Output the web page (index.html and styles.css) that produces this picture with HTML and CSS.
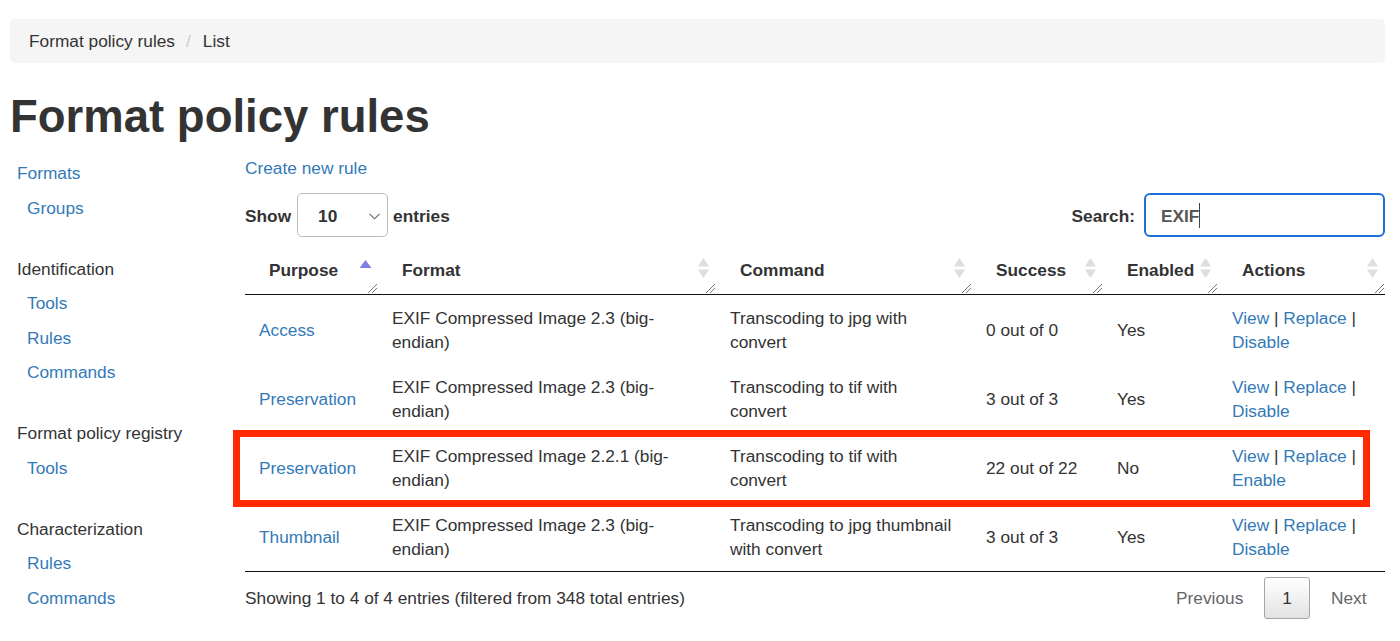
FILE: index.html
```html
<!DOCTYPE html>
<html lang="en">
<head>
<meta charset="utf-8">
<title>Format policy rules</title>
<link rel="stylesheet" href="styles.css">
</head>
<body>
<div class="page">
  <ol class="breadcrumb">
    <li>Format policy rules</li>
    <li class="sep">/</li>
    <li>List</li>
  </ol>
  <h1 class="title">Format policy rules</h1>
  <div class="layout">
    <nav class="sidebar">
      <ul class="nav-section">
        <li class="top"><a href="#">Formats</a></li>
        <li class="sub"><a href="#">Groups</a></li>
      </ul>
      <ul class="nav-section">
        <li class="top">Identification</li>
        <li class="sub"><a href="#">Tools</a></li>
        <li class="sub"><a href="#">Rules</a></li>
        <li class="sub"><a href="#">Commands</a></li>
      </ul>
      <ul class="nav-section">
        <li class="top">Format policy registry</li>
        <li class="sub"><a href="#">Tools</a></li>
      </ul>
      <ul class="nav-section">
        <li class="top">Characterization</li>
        <li class="sub"><a href="#">Rules</a></li>
        <li class="sub"><a href="#">Commands</a></li>
      </ul>
    </nav>
    <main class="main">
      <div class="create-line"><a href="#">Create new rule</a></div>
      <div class="controls">
        <div class="length">
          <span class="ctl-label">Show</span>
          <div class="select-box">
            <span>10</span>
            <svg class="chev" width="11" height="7" viewBox="0 0 11 7"><polyline points="0.5,0.8 5.5,5.8 10.5,0.8" fill="none" stroke="#666" stroke-width="1.1"/></svg>
          </div>
          <span class="ctl-label">entries</span>
        </div>
        <div class="search">
          <span class="ctl-label">Search:</span>
          <div class="search-input"><span>EXIF</span><span class="caret"></span></div>
        </div>
      </div>
      <div class="table-wrap">
        <table class="rules">
          <colgroup>
            <col class="c-purpose"><col class="c-format"><col class="c-command"><col class="c-success"><col class="c-enabled"><col class="c-actions">
          </colgroup>
          <thead>
            <tr>
              <th>Purpose
                <svg class="sort" width="13" height="20" viewBox="0 0 13 20"><polygon points="6.5,2 12.5,10 0.5,10" fill="#7f7fe3"/></svg>
                <svg class="grip" width="10" height="10" viewBox="0 0 10 10"><line x1="1" y1="10" x2="10" y2="1" stroke="#777" stroke-width="1"/><line x1="5" y1="10" x2="10" y2="5" stroke="#777" stroke-width="1"/></svg>
              </th>
              <th>Format
                <svg class="sort" width="13" height="20" viewBox="0 0 13 20"><polygon points="6.5,0 12,8.5 1,8.5" fill="#dedede"/><polygon points="1,11.5 12,11.5 6.5,20" fill="#dedede"/></svg>
                <svg class="grip" width="10" height="10" viewBox="0 0 10 10"><line x1="1" y1="10" x2="10" y2="1" stroke="#777" stroke-width="1"/><line x1="5" y1="10" x2="10" y2="5" stroke="#777" stroke-width="1"/></svg>
              </th>
              <th>Command
                <svg class="sort" width="13" height="20" viewBox="0 0 13 20"><polygon points="6.5,0 12,8.5 1,8.5" fill="#dedede"/><polygon points="1,11.5 12,11.5 6.5,20" fill="#dedede"/></svg>
                <svg class="grip" width="10" height="10" viewBox="0 0 10 10"><line x1="1" y1="10" x2="10" y2="1" stroke="#777" stroke-width="1"/><line x1="5" y1="10" x2="10" y2="5" stroke="#777" stroke-width="1"/></svg>
              </th>
              <th>Success
                <svg class="sort" width="13" height="20" viewBox="0 0 13 20"><polygon points="6.5,0 12,8.5 1,8.5" fill="#dedede"/><polygon points="1,11.5 12,11.5 6.5,20" fill="#dedede"/></svg>
                <svg class="grip" width="10" height="10" viewBox="0 0 10 10"><line x1="1" y1="10" x2="10" y2="1" stroke="#777" stroke-width="1"/><line x1="5" y1="10" x2="10" y2="5" stroke="#777" stroke-width="1"/></svg>
              </th>
              <th>Enabled
                <svg class="sort" width="13" height="20" viewBox="0 0 13 20"><polygon points="6.5,0 12,8.5 1,8.5" fill="#dedede"/><polygon points="1,11.5 12,11.5 6.5,20" fill="#dedede"/></svg>
                <svg class="grip" width="10" height="10" viewBox="0 0 10 10"><line x1="1" y1="10" x2="10" y2="1" stroke="#777" stroke-width="1"/><line x1="5" y1="10" x2="10" y2="5" stroke="#777" stroke-width="1"/></svg>
              </th>
              <th>Actions
                <svg class="sort" width="13" height="20" viewBox="0 0 13 20"><polygon points="6.5,0 12,8.5 1,8.5" fill="#dedede"/><polygon points="1,11.5 12,11.5 6.5,20" fill="#dedede"/></svg>
                <svg class="grip" width="10" height="10" viewBox="0 0 10 10"><line x1="1" y1="10" x2="10" y2="1" stroke="#777" stroke-width="1"/><line x1="5" y1="10" x2="10" y2="5" stroke="#777" stroke-width="1"/></svg>
              </th>
            </tr>
          </thead>
          <tbody>
            <tr>
              <td><a href="#">Access</a></td>
              <td>EXIF Compressed Image 2.3 (big-endian)</td>
              <td>Transcoding to jpg with convert</td>
              <td>0 out of 0</td>
              <td>Yes</td>
              <td><a href="#">View</a> | <a href="#">Replace</a> | <a href="#">Disable</a></td>
            </tr>
            <tr>
              <td><a href="#">Preservation</a></td>
              <td>EXIF Compressed Image 2.3 (big-endian)</td>
              <td>Transcoding to tif with convert</td>
              <td>3 out of 3</td>
              <td>Yes</td>
              <td><a href="#">View</a> | <a href="#">Replace</a> | <a href="#">Disable</a></td>
            </tr>
            <tr>
              <td><a href="#">Preservation</a></td>
              <td>EXIF Compressed Image 2.2.1 (big-endian)</td>
              <td>Transcoding to tif with convert</td>
              <td>22 out of 22</td>
              <td>No</td>
              <td><a href="#">View</a> | <a href="#">Replace</a> | <a href="#">Enable</a></td>
            </tr>
            <tr>
              <td><a href="#">Thumbnail</a></td>
              <td>EXIF Compressed Image 2.3 (big-endian)</td>
              <td>Transcoding to jpg thumbnail with convert</td>
              <td>3 out of 3</td>
              <td>Yes</td>
              <td><a href="#">View</a> | <a href="#">Replace</a> | <a href="#">Disable</a></td>
            </tr>
          </tbody>
        </table>
        <div class="highlight"></div>
      </div>
      <div class="table-footer">
        <div class="info">Showing 1 to 4 of 4 entries (filtered from 348 total entries)</div>
        <div class="pagination">
          <span class="page-btn disabled">Previous</span>
          <span class="page-btn current">1</span>
          <span class="page-btn disabled">Next</span>
        </div>
      </div>
    </main>
  </div>
</div>
</body>
</html>
```

FILE: styles.css
```css
* { box-sizing: border-box; }

html, body {
  margin: 0;
  padding: 0;
  background: #fff;
}

body {
  font-family: "Liberation Sans", Arial, Helvetica, sans-serif;
  font-size: 17.3px;
  line-height: 24px;
  color: #333;
}

a {
  color: #337ab7;
  text-decoration: none;
}

.page {
  padding: 19px 15px 0 10px;
}

.breadcrumb {
  display: flex;
  list-style: none;
  margin: 0;
  padding: 10px 19px;
  background: #f5f5f5;
  border-radius: 5px;
}

.breadcrumb li { line-height: 24px; }

.breadcrumb .sep {
  color: #ccc;
  padding: 0 12px 0 11px;
}

.title {
  margin: 29px 0 13px;
  font-size: 45.5px;
  line-height: 50px;
  font-weight: bold;
  color: #333;
}

.layout {
  display: grid;
  grid-template-columns: 235px 1fr;
  padding-top: 1px;
}

.sidebar { padding: 0; }

.nav-section {
  list-style: none;
  margin: 0 0 26.5px;
  padding: 0;
}

.nav-section li {
  padding: 5px 0;
  line-height: 24.5px;
}

.nav-section .top { padding-left: 7px; }
.nav-section .sub { padding-left: 17px; }

.main { min-width: 0; }

.create-line { line-height: 24px; }

.controls {
  margin-top: 13px;
  height: 44px;
  display: flex;
  justify-content: space-between;
  align-items: center;
  font-weight: bold;
}

.length, .search {
  display: flex;
  align-items: center;
}

.ctl-label {
  padding-top: 2px;
}

.select-box {
  margin: 0 5px 0 6px;
  width: 91px;
  height: 44px;
  border: 1px solid #bbb;
  border-radius: 5px;
  display: flex;
  align-items: center;
  justify-content: space-between;
  padding: 2px 7px 0 20px;
  background: #fff;
}

.chev { margin-top: 0; }

.search-input {
  margin-left: 9px;
  width: 241px;
  height: 44px;
  border: 2px solid #1e6fd6;
  border-radius: 6px;
  display: flex;
  align-items: center;
  padding: 1px 0 0 15px;
  color: #555;
}

.caret {
  display: inline-block;
  width: 1px;
  height: 25px;
  background: #444;
}

.table-wrap {
  position: relative;
  margin-top: 8px;
}

.rules {
  width: 1140px;
  border-collapse: collapse;
  table-layout: fixed;
}

.c-purpose { width: 133px; }
.c-format { width: 338px; }
.c-command { width: 256px; }
.c-success { width: 131px; }
.c-enabled { width: 115px; }
.c-actions { width: 167px; }

.rules th {
  position: relative;
  text-align: left;
  font-weight: bold;
  padding: 12.5px 24px 12px 24px;
  line-height: 24px;
  border-bottom: 1px solid #111;
  white-space: nowrap;
}

.rules th .sort {
  position: absolute;
  right: 6px;
  top: 13px;
}

.rules th .grip {
  position: absolute;
  right: 1px;
  bottom: 1px;
}

.rules td {
  padding: 11px 14px 10px 14px;
  line-height: 24px;
  vertical-align: middle;
}

.rules tbody tr:last-child td {
  border-bottom: 1px solid #111;
}

.highlight {
  position: absolute;
  left: -12px;
  top: 185px;
  width: 1137px;
  height: 77px;
  border: 7px solid #ff2a00;
  pointer-events: none;
}

.table-footer {
  display: flex;
  justify-content: space-between;
  align-items: flex-start;
}

.info {
  padding-top: 14px;
}

.pagination {
  display: flex;
  padding-top: 5px;
}

.page-btn {
  padding: 8px 17.5px;
  border: 1px solid transparent;
  border-radius: 3px;
  line-height: 24px;
  margin-left: 2px;
}

.page-btn.disabled { color: #666; }

.page-btn.current {
  border-color: #a5a5a5;
  background: linear-gradient(to bottom, #fff 0%, #e2e2e2 100%);
  color: #333;
}
```
